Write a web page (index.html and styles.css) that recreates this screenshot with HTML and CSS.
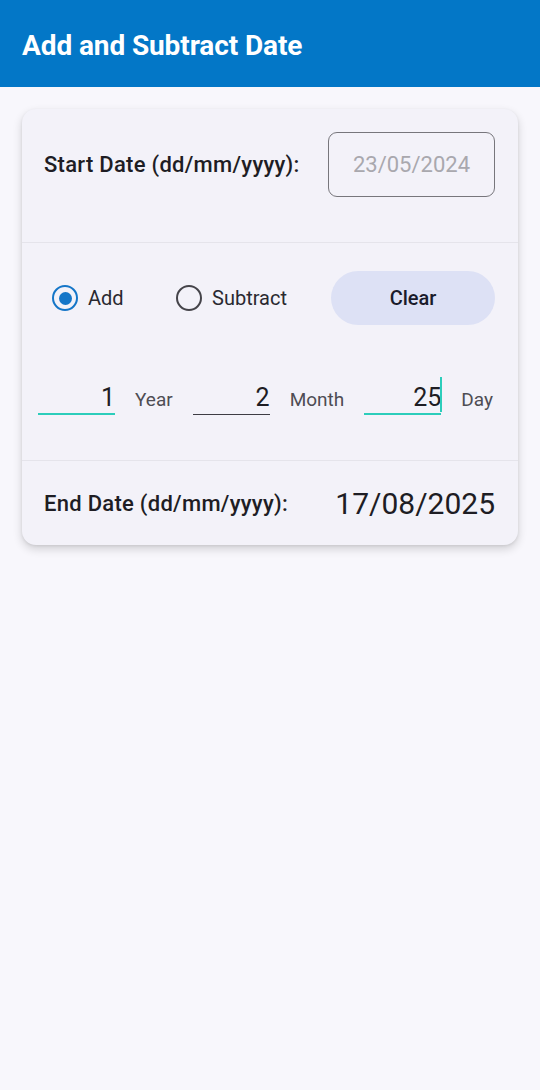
FILE: index.html
```html
<!DOCTYPE html>
<html lang="en">
<head>
<meta charset="utf-8">
<title>Add and Subtract Date</title>
<link rel="stylesheet" href="styles.css">
</head>
<body>
<header class="appbar">
  <h1 class="appbar-title">Add and Subtract Date</h1>
</header>
<main class="content">
  <section class="card">
    <div class="section section-start">
      <span class="label">Start Date (dd/mm/yyyy):</span>
      <div class="date-box">23/05/2024</div>
    </div>
    <div class="divider"></div>
    <div class="section section-ops">
      <div class="ops-row">
        <div class="radio-item radio-add">
          <span class="radio radio-on"><span class="radio-dot"></span></span>
          <span class="radio-label">Add</span>
        </div>
        <div class="radio-item">
          <span class="radio"></span>
          <span class="radio-label">Subtract</span>
        </div>
        <button class="clear-btn">Clear</button>
      </div>
      <div class="fields-row">
        <div class="field field-active">1</div>
        <span class="unit">Year</span>
        <div class="field">2</div>
        <span class="unit">Month</span>
        <div class="field field-active field-focus">25<span class="caret"></span></div>
        <span class="unit">Day</span>
      </div>
    </div>
    <div class="divider"></div>
    <div class="section section-end">
      <span class="label">End Date (dd/mm/yyyy):</span>
      <span class="end-date">17/08/2025</span>
    </div>
  </section>
</main>
</body>
</html>
```

FILE: styles.css
```css
* { box-sizing: border-box; }

html, body {
  margin: 0;
  padding: 0;
}

body {
  background: #f8f7fc;
  font-family: Roboto, "Noto Sans", "Liberation Sans", sans-serif;
  color: #1c1b22;
  width: 540px;
  min-height: 1090px;
}

.appbar {
  height: 87px;
  background: #0377c7;
  padding: 32px 22px 0;
}

.appbar-title {
  margin: 0;
  font-size: 28px;
  line-height: 28px;
  font-weight: 700;
  color: #ffffff;
  letter-spacing: -0.1px;
}

.content {
  padding: 22px 22px 0;
}

.card {
  background: #f3f2f9;
  border-radius: 14px;
  box-shadow: 0 4px 10px rgba(0, 0, 0, 0.16), 0 1px 3px rgba(0, 0, 0, 0.08);
}

.divider {
  height: 1px;
  background: #e5e4eb;
}

.section-start {
  display: flex;
  align-items: center;
  justify-content: space-between;
  padding: 23px 23px 45px 22px;
}

.label {
  font-size: 22px;
  font-weight: 500;
  letter-spacing: 0.28px;
  color: #1e1d24;
}

.date-box {
  width: 167px;
  height: 65px;
  border: 1.5px solid #77767c;
  border-radius: 9px;
  display: flex;
  align-items: center;
  justify-content: center;
  font-size: 22px;
  color: #a9a8ae;
}

.section-ops {
  padding: 28px 23px 45px 16px;
}

.ops-row {
  display: flex;
  align-items: center;
  height: 54px;
}

.radio-item {
  display: flex;
  align-items: center;
  gap: 10px;
}

.radio-add {
  margin-left: 14px;
  width: 124px;
}

.radio {
  width: 26px;
  height: 26px;
  border-radius: 50%;
  border: 2.5px solid #45444a;
  display: flex;
  align-items: center;
  justify-content: center;
}

.radio-on {
  border-color: #1576c8;
}

.radio-dot {
  width: 13px;
  height: 13px;
  border-radius: 50%;
  background: #1576c8;
}

.radio-label {
  font-size: 20px;
  color: #2a2930;
}

.clear-btn {
  margin-left: auto;
  width: 164px;
  height: 54px;
  border: none;
  border-radius: 27px;
  background: #dde1f5;
  font-family: Roboto, "Noto Sans", "Liberation Sans", sans-serif;
  font-size: 20px;
  font-weight: 500;
  color: #1a1b2b;
}

.fields-row {
  display: flex;
  align-items: baseline;
  gap: 20px;
  margin-top: 42px;
}

.field {
  position: relative;
  width: 77px;
  height: 48px;
  padding-top: 18px;
  padding-bottom: 5px;
  text-align: right;
  font-size: 25px;
  line-height: 25px;
  color: #1e1d24;
  border-bottom: 1.5px solid #3e3d44;
}

.field-active {
  border-bottom: 2.5px solid #2ccdbb;
}

.caret {
  position: absolute;
  right: -1px;
  top: 10px;
  width: 2.5px;
  height: 35px;
  background: #2ccdbb;
}

.unit {
  font-size: 19px;
  color: #4e4d54;
}

.section-end {
  display: flex;
  align-items: center;
  justify-content: space-between;
  height: 84px;
  padding: 0 23px 0 22px;
}

.end-date {
  font-size: 30px;
  color: #1e1d24;
}
```
